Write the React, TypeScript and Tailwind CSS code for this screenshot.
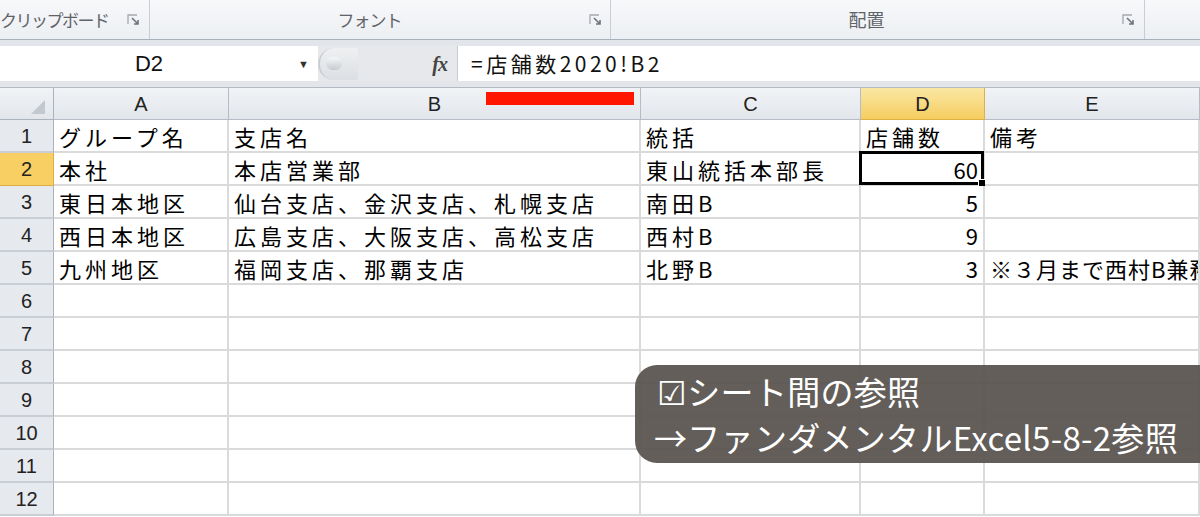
import type { FC } from "react";

const CJK = "font-['Noto_Sans_CJK_JP','Noto_Sans',sans-serif]";

const COLS = ["A", "B", "C", "D", "E"];

type Row = [string, string, string, string, string];

const ROWS: Row[] = [
	["グループ名", "支店名", "統括", "店舗数", "備考"],
	["本社", "本店営業部", "東山統括本部長", "60", ""],
	["東日本地区", "仙台支店、金沢支店、札幌支店", "南田B", "5", ""],
	["西日本地区", "広島支店、大阪支店、高松支店", "西村B", "9", ""],
	["九州地区", "福岡支店、那覇支店", "北野B", "3", "※３月まで西村B兼務"],
	["", "", "", "", ""],
	["", "", "", "", ""],
	["", "", "", "", ""],
	["", "", "", "", ""],
	["", "", "", "", ""],
	["", "", "", "", ""],
	["", "", "", "", ""],
];

// small ribbon "dialog launcher" glyph
const Launcher: FC = () => (
	<svg width="13" height="12" viewBox="0 0 13 12" className="shrink-0">
		<path d="M1 10V1h9" fill="none" stroke="#a4a9b0" strokeWidth="1.3" />
		<path d="M5 4l6 6M7 10h4V6" fill="none" stroke="#6f757d" strokeWidth="1.6" />
	</svg>
);

const Ribbon: FC = () => (
	<div className="flex h-[40px] bg-gradient-to-b from-[#f7f8fa] to-[#eceff3] border-b border-[#a9b1ba]">
		<div className="w-[150px] flex items-center border-r border-[#c9ced5] pr-[9px] overflow-hidden">
			<span className={`${CJK} flex-1 text-[17px] tracking-[-1.5px] text-[#5f6368]`}>
				クリップボード
			</span>
			<Launcher />
		</div>
		<div className="w-[461px] flex items-center border-r border-[#c9ced5] pr-[8px]">
			<span className={`${CJK} flex-1 text-center text-[17px] tracking-[-1px] text-[#5f6368]`}>
				フォント
			</span>
			<Launcher />
		</div>
		<div className="w-[534px] flex items-center border-r border-[#c9ced5] pr-[9px]">
			<span className={`${CJK} flex-1 text-center text-[18px] text-[#5f6368]`}>
				配置
			</span>
			<Launcher />
		</div>
		<div className="flex-1" />
	</div>
);

const FormulaBar: FC = () => (
	<div className="bg-[#e2e6eb] pt-[6px] pb-[6px] border-b border-[#b3bac2]">
		<div className="flex h-[35px]">
			<div className="w-[318px] bg-white flex items-center">
				<span className="flex-1 text-center text-[22px] text-[#111] font-['Liberation_Sans',sans-serif]">
					D2
				</span>
				<span className="text-[11px] text-[#333] mr-[9px] leading-none">▼</span>
			</div>
			<div className="w-[139px] flex items-center bg-[#e6e8eb]">
				<div className="h-[32px] w-[40px] rounded-l-full border-l-2 border-[#c9cdd2] bg-gradient-to-b from-[#eef0f2] to-[#dcdfe3] flex items-center pl-[6px]">
					<div className="w-[16px] h-[13px] rounded-full bg-gradient-to-b from-[#f6f7f8] to-[#c7cbd0]" />
				</div>
				<div className="flex-1" />
				<span className="font-['Liberation_Serif',serif] italic font-bold text-[20px] text-[#444] mr-[10px] tracking-[-1px]">
					fx
				</span>
			</div>
			<div className="flex-1 bg-white border-l border-[#c6cbd1] flex items-center pl-[13px]">
				<span className={`${CJK} text-[21px] tracking-[3.5px] text-[#111]`}>
					=店舗数2020!B2
				</span>
			</div>
		</div>
	</div>
);

const Sheet: FC = () => (
	<div className="grid grid-cols-[54px_175px_412px_220px_124px_1fr] grid-rows-[32px_repeat(12,33px)]">
		{/* header row */}
		<div className="bg-gradient-to-b from-[#f1f3f6] to-[#e2e6eb] border-r border-b border-[#aab2bc] flex items-end justify-end pr-[8px] pb-[5px]">
			<svg width="14" height="14" viewBox="0 0 14 14">
				<path d="M14 0V14H0Z" fill="#c3c8ce" />
			</svg>
		</div>
		{COLS.map((c) => (
			<div
				key={c}
				className={
					c === "D"
						? "bg-gradient-to-b from-[#fae7a3] to-[#f6cd5f] border-r border-b border-[#dfb042] flex items-center justify-center text-[20px] text-[#222] font-['Liberation_Sans',sans-serif]"
						: "bg-gradient-to-b from-[#f1f3f6] to-[#e2e6eb] border-r border-b border-[#b5bcc5] flex items-center justify-center text-[20px] text-[#222] font-['Liberation_Sans',sans-serif]"
				}
			>
				{c}
			</div>
		))}

		{ROWS.map((r, i) => (
			<div key={i} className="contents">
				<div
					className={
						i === 1
							? "bg-[#f7cf63] border-r border-b border-[#dcae45] flex items-center justify-center text-[20px] text-[#222] font-['Liberation_Sans',sans-serif]"
							: "bg-[#e6e9ed] border-r border-b-2 border-r-[#aab2bc] border-b-[#c9ced5] flex items-center justify-center text-[20px] text-[#222] font-['Liberation_Sans',sans-serif]"
					}
				>
					{i + 1}
				</div>
				{r.map((v, j) => {
					const isNum = j === 3 && i > 0;
					const spacing = isNum ? "" : j === 4 && i > 0 ? "tracking-[1px]" : "tracking-[4px]";
					return (
						<div
							key={j}
							className={`relative border-r-2 border-b-2 border-[#dadada] bg-white flex items-center whitespace-nowrap ${j === 4 ? "overflow-hidden" : ""} ${isNum ? "justify-end pr-[5px]" : "pl-[5px]"}`}
						>
							<span className={`${CJK} text-[22px] text-black leading-none ${spacing}`}>
								{v}
							</span>
							{i === 1 && j === 3 && (
								<div className="absolute -left-[2px] -top-[2px] -right-[1px] -bottom-[1px] border-[3px] border-black">
									<div className="absolute -right-[5px] -bottom-[5px] w-[8px] h-[8px] bg-black border border-white" />
								</div>
							)}
						</div>
					);
				})}
			</div>
		))}
	</div>
);

const App: FC = () => (
	<div className="relative w-[1200px] h-[517px] overflow-hidden bg-white">
		<Ribbon />
		<FormulaBar />
		<Sheet />

		{/* red marker under the formula */}
		<div className="absolute left-[486px] top-[92px] w-[148px] h-[13px] bg-[#ff1500]" />

		{/* caption box */}
		<div className="absolute left-[635px] top-[365px] right-0 h-[98px] rounded-l-[22px] bg-[#57524d]/[0.93] flex flex-col justify-center pl-[22px]">
			<div className={`${CJK} text-[33px] tracking-[0.3px] leading-[46px] text-white`}>
				☑シート間の参照
			</div>
			<div className={`${CJK} text-[33px] tracking-[0.3px] leading-[46px] text-white -ml-[3px]`}>
				→ファンダメンタルExcel5-8-2参照
			</div>
		</div>
	</div>
);

export default App;
